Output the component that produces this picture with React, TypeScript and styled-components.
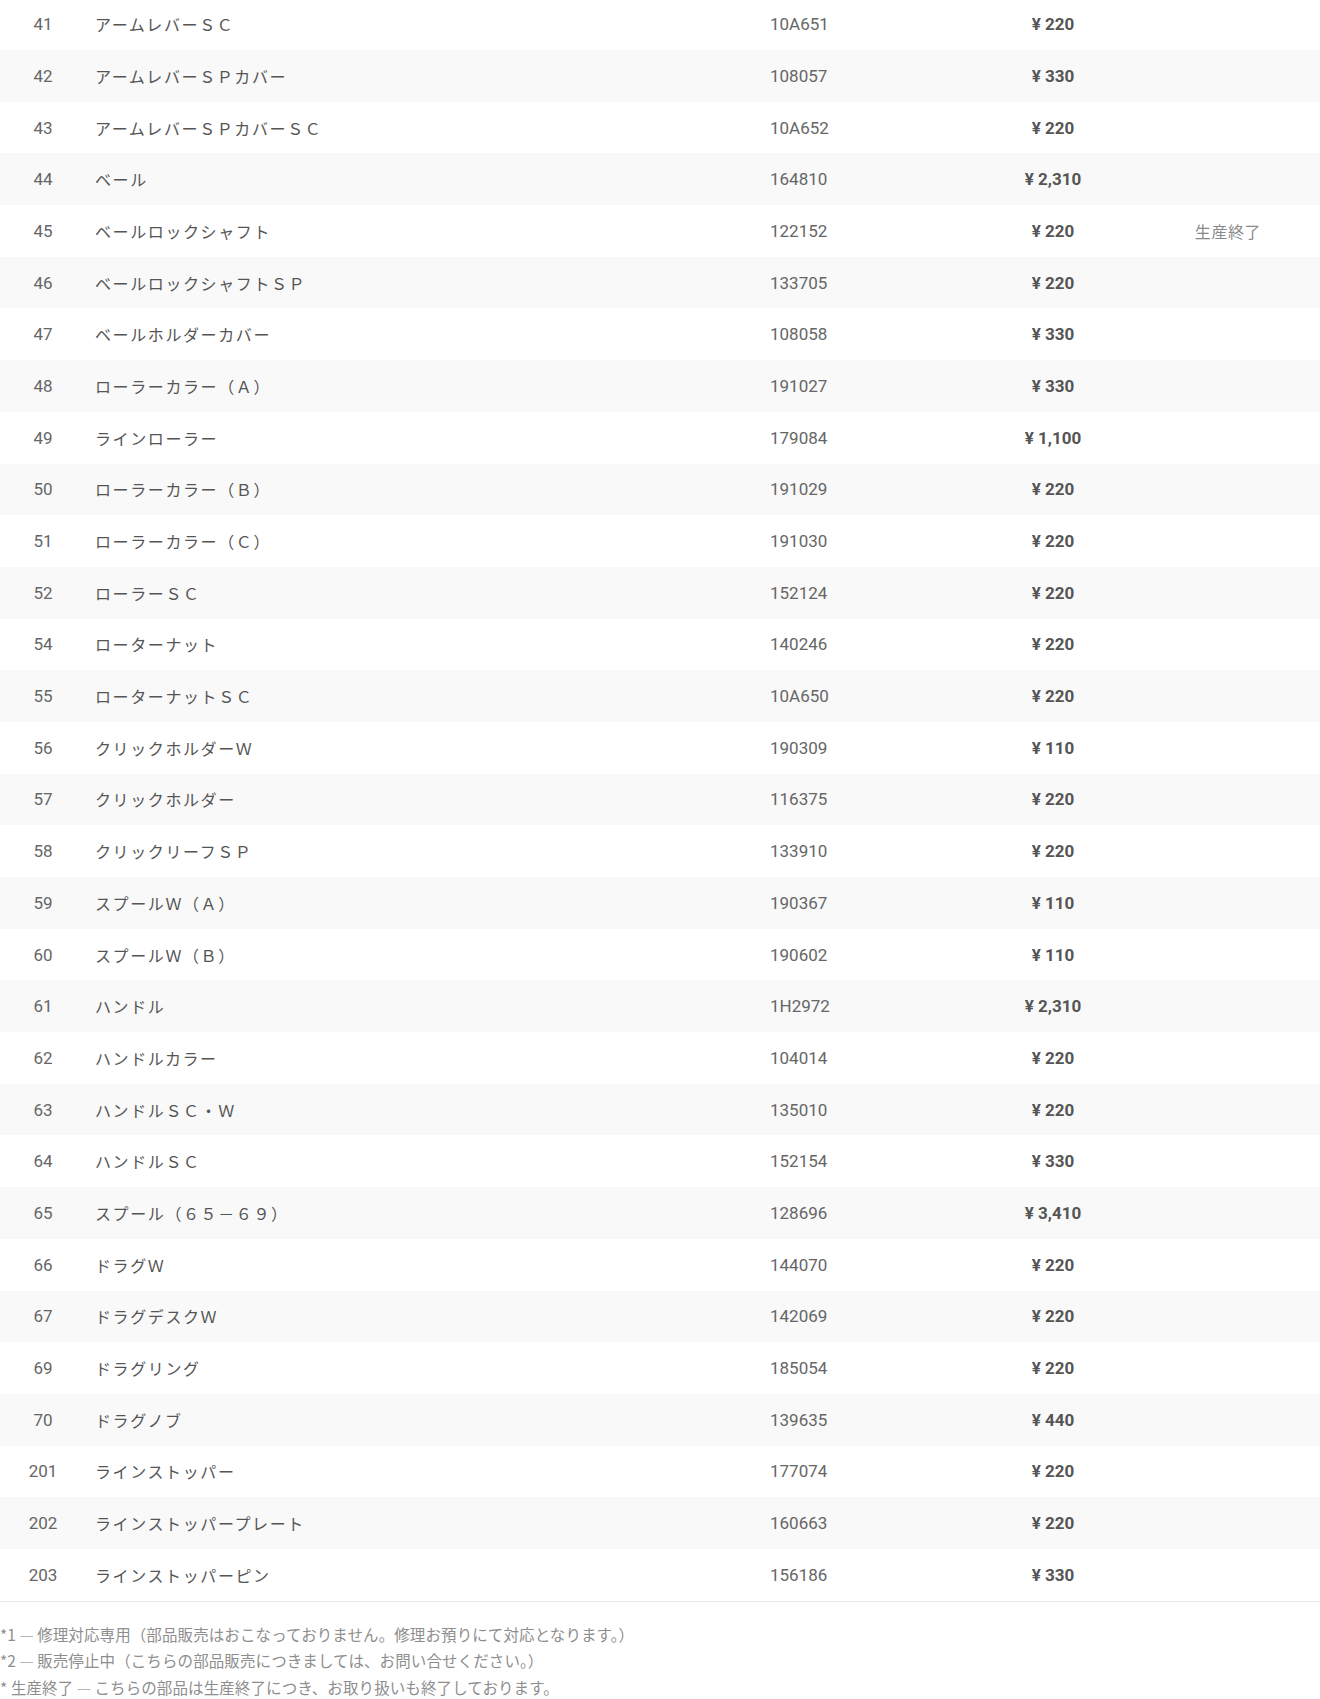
import React from "react";
import styled, { createGlobalStyle } from "styled-components";

const GlobalStyle = createGlobalStyle`
  html, body {
    margin: 0;
    padding: 0;
    background: #ffffff;
  }
  body {
    font-family: "Noto Sans CJK JP", "Noto Sans", sans-serif;
    color: #555555;
  }
`;

type Part = { no: string; name: string; code: string; price: string; note?: string };

const parts: Part[] = [
  { no: "41", name: "アームレバーＳＣ", code: "10A651", price: "220" },
  { no: "42", name: "アームレバーＳＰカバー", code: "108057", price: "330" },
  { no: "43", name: "アームレバーＳＰカバーＳＣ", code: "10A652", price: "220" },
  { no: "44", name: "ベール", code: "164810", price: "2,310" },
  { no: "45", name: "ベールロックシャフト", code: "122152", price: "220", note: "生産終了" },
  { no: "46", name: "ベールロックシャフトＳＰ", code: "133705", price: "220" },
  { no: "47", name: "ベールホルダーカバー", code: "108058", price: "330" },
  { no: "48", name: "ローラーカラー（Ａ）", code: "191027", price: "330" },
  { no: "49", name: "ラインローラー", code: "179084", price: "1,100" },
  { no: "50", name: "ローラーカラー（Ｂ）", code: "191029", price: "220" },
  { no: "51", name: "ローラーカラー（Ｃ）", code: "191030", price: "220" },
  { no: "52", name: "ローラーＳＣ", code: "152124", price: "220" },
  { no: "54", name: "ローターナット", code: "140246", price: "220" },
  { no: "55", name: "ローターナットＳＣ", code: "10A650", price: "220" },
  { no: "56", name: "クリックホルダーＷ", code: "190309", price: "110" },
  { no: "57", name: "クリックホルダー", code: "116375", price: "220" },
  { no: "58", name: "クリックリーフＳＰ", code: "133910", price: "220" },
  { no: "59", name: "スプールＷ（Ａ）", code: "190367", price: "110" },
  { no: "60", name: "スプールＷ（Ｂ）", code: "190602", price: "110" },
  { no: "61", name: "ハンドル", code: "1H2972", price: "2,310" },
  { no: "62", name: "ハンドルカラー", code: "104014", price: "220" },
  { no: "63", name: "ハンドルＳＣ・Ｗ", code: "135010", price: "220" },
  { no: "64", name: "ハンドルＳＣ", code: "152154", price: "330" },
  { no: "65", name: "スプール（６５－６９）", code: "128696", price: "3,410" },
  { no: "66", name: "ドラグＷ", code: "144070", price: "220" },
  { no: "67", name: "ドラグデスクＷ", code: "142069", price: "220" },
  { no: "69", name: "ドラグリング", code: "185054", price: "220" },
  { no: "70", name: "ドラグノブ", code: "139635", price: "440" },
  { no: "201", name: "ラインストッパー", code: "177074", price: "220" },
  { no: "202", name: "ラインストッパープレート", code: "160663", price: "220" },
  { no: "203", name: "ラインストッパーピン", code: "156186", price: "330" },
];

const Page = styled.div`
  width: 1320px;
`;

const Table = styled.div`
  display: flex;
  flex-direction: column;
  margin-top: -1.7px;
  border-bottom: 1px solid #e8e8e8;
`;

const Row = styled.div<{ $striped: boolean }>`
  display: grid;
  grid-template-columns: 86px 675px 209px 166px 1fr;
  align-items: center;
  height: 51.7px;
  background: ${(p) => (p.$striped ? "#f9f9f9" : "#ffffff")};
`;

const NumCell = styled.div`
  text-align: center;
  font-family: Roboto, "Liberation Sans", sans-serif;
  font-size: 17px;
  color: #666666;
`;

const NameCell = styled.div`
  padding-left: 9px;
  font-family: "Noto Sans CJK JP", "Noto Sans", sans-serif;
  font-size: 16px;
  letter-spacing: 1.6px;
  color: #555555;
`;

const CodeCell = styled.div`
  padding-left: 9px;
  font-family: Roboto, "Liberation Sans", sans-serif;
  font-size: 17px;
  color: #666666;
`;

const PriceCell = styled.div`
  text-align: center;
  font-family: Roboto, "Liberation Sans", sans-serif;
  font-size: 17px;
  font-weight: 700;
  color: #555555;
`;

const Yen = styled.span`
  margin-right: 4px;
`;

const NoteCell = styled.div`
  text-align: center;
  font-family: "Noto Sans CJK JP", "Noto Sans", sans-serif;
  font-size: 16px;
  letter-spacing: 0.6px;
  color: #8a8a8a;
`;

const Notes = styled.div`
  padding-top: 19px;
  display: flex;
  flex-direction: column;
`;

const NoteLine = styled.p`
  margin: 0;
  font-family: "Noto Sans CJK JP", "Noto Sans", sans-serif;
  font-size: 15.5px;
  line-height: 26.5px;
  letter-spacing: 0.1px;
  color: #8e8e8e;
`;

const Dash = styled.span`
  color: #b5b5b5;
`;

export default function App() {
  return (
    <Page>
      <GlobalStyle />
      <Table>
        {parts.map((p, i) => (
          <Row key={p.no} $striped={i % 2 === 1}>
            <NumCell>{p.no}</NumCell>
            <NameCell>{p.name}</NameCell>
            <CodeCell>{p.code}</CodeCell>
            <PriceCell>
              <Yen>¥</Yen>
              {p.price}
            </PriceCell>
            <NoteCell>{p.note ?? ""}</NoteCell>
          </Row>
        ))}
      </Table>
      <Notes>
        <NoteLine>
          *1 <Dash>—</Dash> 修理対応専用（部品販売はおこなっておりません。修理お預りにて対応となります。）
        </NoteLine>
        <NoteLine>
          *2 <Dash>—</Dash> 販売停止中（こちらの部品販売につきましては、お問い合せください。）
        </NoteLine>
        <NoteLine>
          * 生産終了 <Dash>—</Dash> こちらの部品は生産終了につき、お取り扱いも終了しております。
        </NoteLine>
      </Notes>
    </Page>
  );
}
